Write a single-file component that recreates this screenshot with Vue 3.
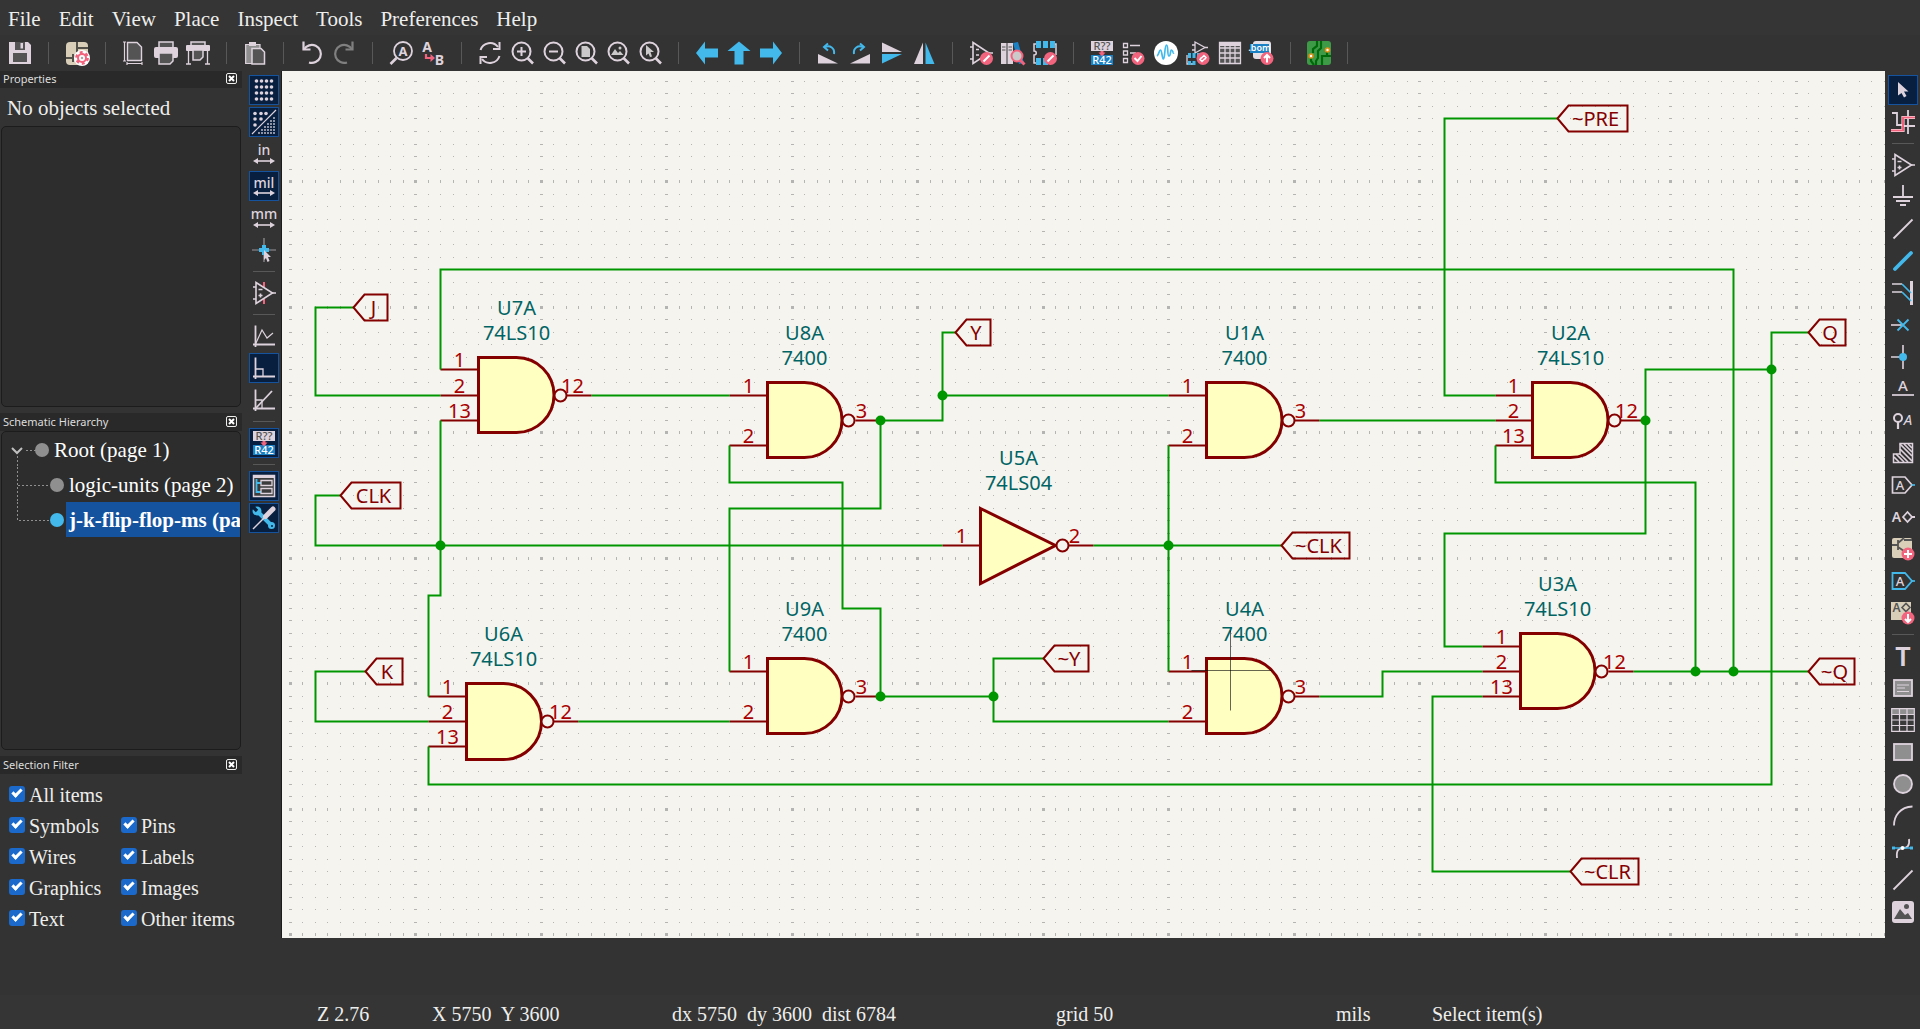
<script setup>
const L = '#ded3dd'
const B = '#42b8eb'
const R = '#f2647e'
const G = '#545454'
const T = '#1a81c4'

const line = (d, c = L, w = 1.6, extra = '') =>
  `<path d="${d}" fill="none" stroke="${c}" stroke-width="${w}" ${extra}/>`
const fill = (d, c = L) => `<path d="${d}" fill="${c}"/>`
const word = (x, y, s, t, c = L, w = 400, extra = '') =>
  `<text x="${x}" y="${y}" font-size="${s}" fill="${c}" font-weight="${w}" text-anchor="middle" font-family="Noto Sans, sans-serif" ${extra}>${t}</text>`
const dot = (x, y, r, c) => `<circle cx="${x}" cy="${y}" r="${r}" fill="${c}"/>`
const ring = (x, y, r, c, w, dash = '') =>
  `<circle cx="${x}" cy="${y}" r="${r}" fill="none" stroke="${c}" stroke-width="${w}" stroke-dasharray="${dash}"/>`
const rect = (x, y, w, h, c, extra = '') =>
  `<rect x="${x}" y="${y}" width="${w}" height="${h}" fill="${c}" ${extra}/>`
const lens = `<circle cx="11.5" cy="10.5" r="9" fill="none" stroke="${L}" stroke-width="2"/>` + line('M17.5 17L23 22.5', L, 2.6)
const opamp = line('M4 1.5L20.5 12L4 22.5Z') + line('M1 6H4M1 18H4M20 12H24') + line('M6.5 8.5H10.5M6.5 14.5H10.5M8.5 12.5V16.5')
const badge = (x, y, d) => dot(x, y, 6.5, R) + line(d, '#fff', 2)
const renumber = rect(1, 0, 22, 10, L) + word(12, 9, 11, 'R??', G, 500) + rect(1, 14, 22, 10, T) + word(12, 23, 11, 'R42', '#fff', 500) + fill('M8.5 11.5H10.5V10H13.5V11.5H15.5L12 15.5Z', R)
const dots = (() => {
  let s = ''
  for (let a = 0; a < 4; a++) for (let b = 0; b < 4; b++) s += dot(4.5 + a * 5, 3 + b * 6, 1.8, L)
  return s
})()
const dotsHalf = (() => {
  let s = dot(3, 3.5, 1.8, L) + dot(9, 3.5, 1.8, L) + dot(14, 3.5, 1.8, L) + dot(3, 9, 1.8, L) + dot(9, 9, 1.8, L) + dot(3, 15, 1.8, L)
  for (let a = 0; a < 6; a++) for (let b = 0; b < 6; b++) if (a + b > 4) s += rect(6 + a * 3, 7 + b * 3, 2, 2, '#8d93a5')
  return s + line('M0 24L24 0', L, 1.2)
})()
const span = line('M3 19H21') + fill('M1 19L6 16V22ZM23 19L18 16V22Z')
const axes = line('M3.5 1.5V23M1 20.5H23', L, 1.8)

const icons = {
  save: fill('M1 1H20L23 4V23H1Z') + rect(5, 12, 14, 9, G) + rect(7, 1, 10, 8, G) + rect(12.5, 2, 2.5, 5.5, L),
  setup: rect(1, 1, 22, 23, '#d9cfb9', 'rx="4"') + line('M1 17H8M8 13V21M8 17L14 12M12 1V7H23M12 7V12', '#54504a', 2) + dot(17, 17, 8, '#fff') + dot(17, 17, 5, R) + ring(17, 17, 5.6, R, 2.6, '2.93 2.93') + dot(17, 17, 3, '#fff') + dot(17, 17, 1.3, '#aaa'),
  page: line('M2.5 1V20M1 1H4M1 20H4M5 22.5H20M5 21V24M20 21V24', L, 1.2) + `<path d="M5.5 1.5H15L19.5 6V19.5H5.5Z" fill="${G}" stroke="${L}" stroke-width="1.4"/>`,
  print: `<path d="M5 6V1H19V6" fill="${G}" stroke="${L}" stroke-width="1.5"/>` + rect(0, 6, 24, 11, L, 'rx="2"') + `<path d="M5 12H19V20L16 23H5Z" fill="${G}" stroke="${L}" stroke-width="1.5"/>`,
  plot: `<path d="M5 5V1H19V5" fill="${G}" stroke="${L}" stroke-width="1.5"/>` + rect(0, 4, 24, 6, L, 'rx="1"') + line('M2.5 10V23M21.5 10V23M0 23H5M19 23H24', L, 1.3) + `<path d="M7 9H17V16L14 19H7Z" fill="${G}" stroke="${L}" stroke-width="1.5"/>`,
  paste: rect(2, 3, 15, 20, '#8f8f8f') + line('M2.7 3.5H17V22.5H2.7Z', L, 1.2) + rect(6, 1, 7, 4, L) + `<path d="M9 7.5H18L21.5 11V23H9Z" fill="${G}" stroke="${L}" stroke-width="1.5"/>`,
  undo: line('M4 8.5A9 9 0 1 1 9 21.5', L, 2.2) + line('M3.5 0.5V8.5H10.5', L, 2.2),
  redo: line('M20 8.5A9 9 0 1 0 15 21.5', '#808080', 2.2) + line('M20.5 0.5V8.5H13.5', '#808080', 2.2),
  find: `<circle cx="14" cy="10" r="9" fill="none" stroke="${L}" stroke-width="1.8"/>` + line('M7.5 17L1.5 23', L, 2.6) + word(14, 15, 13, 'A', L, 700),
  replace: word(6, 11, 14, 'A', L, 700) + word(18.5, 24, 14, 'B', L, 700) + line('M5 13V17H11', R, 2.2) + fill('M9.5 13L14 17L9.5 21Z', R),
  refresh: line('M2.5 9A10 10 0 0 1 20 6M21.5 15A10 10 0 0 1 4 18', L, 2) + line('M21.5 1V8H15M2.5 23V16H9', L, 2),
  zoomIn: lens + line('M7 10.5H16M11.5 6V15', L, 2),
  zoomOut: lens + line('M7 10.5H16', L, 2),
  zoomFit: lens + fill('M7.5 5H13L16 8V16H7.5Z', '#ccc9cb'),
  zoomObj: lens + fill('M5 14L9 8L12 12L14 10L17.5 14Z', '#ccc9cb') + dot(14, 7, 1.5, '#ccc9cb'),
  zoomSel: lens + fill('M8 4L16 11H12.5L14 15.5L12 16L10.5 12.5L8 14.5Z', '#ccc9cb'),
  left: fill('M1 12L10 0.5V7.5H23V16.5H10V23.5Z', B),
  up: fill('M12 0.5L23.5 10H16.5V23.5H7.5V10H0.5Z', B),
  right: fill('M23 12L14 0.5V7.5H1V16.5H14V23.5Z', B),
  rotL: fill('M2 13L22 22.5H2Z') + line('M18 13C19 7 14 4 9 6', B, 2) + line('M12 2.5L8 6L12 9.5', B, 2),
  rotR: fill('M22 13L2 22.5H22Z') + line('M6 13C5 7 10 4 15 6', B, 2) + line('M12 2.5L16 6L12 9.5', B, 2),
  flipV: fill('M2 1.5L22 11H2Z') + fill('M2 13H22L2 22.5Z', B),
  flipH: fill('M11 1.5V23H2Z') + fill('M13.5 1.5L22.5 23H13.5Z', B),
  symEdit: line('M4 1.5L20 12L4 22.5Z') + line('M1 6H4M1 18H4M20 12H24M7 8.5H10M7 14H10') + badge(17.5, 17.5, 'M14.5 20.5L20.5 14.5'),
  library: rect(0, 2, 5.5, 21, L) + rect(6.5, 2, 5.5, 21, L) + fill('M12 2L17 1L23 22L18 23Z', T) + line('M1 6H4.5M7.5 6H11M1 9H4.5M7.5 9H11', G, 1) + `<circle cx="16" cy="15" r="5.5" fill="#ccc9cb" stroke="${R}" stroke-width="2"/>` + line('M19 19L23.5 23.5', R, 3),
  fpEdit: line('M3 3H1V10C4 10 4 14 1 14V22H4M21 3H23V14', L, 1.5) + fill('M3 0H8V7H3ZM10 0H15V7H10ZM17 0H22V7H17ZM3 17H8V24H3ZM10 17H15V24H10Z', B) + badge(17.5, 17.5, 'M14.5 20.5L20.5 14.5'),
  renumber,
  erc: line('M1.5 2.5H5.5V6.5H1.5ZM1.5 10H5.5V14H1.5ZM1.5 17.5H5.5V21.5H1.5Z', L, 1.3) + line('M8 4.5H18M8 12H14', L, 1.5) + badge(16, 17.5, 'M12.5 17L15.5 20L19.5 15'),
  sim: dot(12, 12, 12, '#fff') + line('M3 15C5 14 5 9 6.5 9S8 18 9.5 18S10.5 4 12.5 4S13 15 15 15S16 9 17.5 9S19 13 20 12', B, 1.7),
  assign: line('M9 1L19 6.5L9 12ZM6 4H9M6 9H9M19 6.5H22', L, 1.3) + line('M1 14V23H8', L, 1.3) + fill('M2 12H5V17H2ZM6.5 12H9.5V17H6.5ZM11 12H14V17H11ZM2 20H5V24H2ZM6.5 20H9.5V24H6.5Z', B) + dot(17, 17.5, 6.5, R) + line('M15.5 17L18 14.5L20 16.5L18.5 18.5M18.5 18L16 20.5L14 18.5L15.5 16.5', '#fff', 1.5),
  table: rect(1, 1, 22, 22, G) + line('M1.5 1.5H22.5V22.5H1.5ZM1.5 7H22.5M1.5 12H22.5M1.5 17H22.5M7 1V23M12 5V23M17 5V23', L, 1.3) + rect(1, 1, 22, 4, L),
  bom: rect(3, 0, 18, 18, '#e4dfe4', 'rx="3"') + rect(0, 3, 19, 9, T) + word(9.5, 10, 9, '.bom', '#fff', 600) + badge(17, 17.5, 'M17 21.5V14.5M14 17L17 14L20 17'),
  pcb: rect(0, 0, 24, 24, '#3f9a48', 'rx="3"') + line('M4 15V20L7 24M10 0V5L6 8V12M14 0V7L11 10V17L9 20V24M24 15H15V24M20 9V14', '#00690a', 2.2) + dot(20.5, 9, 2.7, '#e39017') + dot(20.5, 9, 1.2, '#fff') + dot(4, 15, 2.7, '#e39017') + dot(4, 15, 1.2, '#fff'),
  dots,
  dotsHalf,
  inch: word(12, 13, 14, 'in', L, 500) + span,
  mil: word(12, 14, 14, 'mil', L, 500) + span,
  mm: word(12, 13, 14, 'mm', L, 500) + span,
  crosshair: line('M12 0V24M0 12H24', '#9a959a', 1.2) + line('M12 7V17M7 12H17', B, 4) + fill('M12 12L19 19H16L17.5 23L15.5 24L14 20L12 22Z'),
  hiddenPins: line('M12 1V6M12 18V23', R, 2) + opamp,
  freeAngle: axes + line('M3.5 20L10 6L15 14L21 9', L, 1.2),
  rightAngle: axes + line('M3.5 13H11V20.5', L, 1.3),
  angle45: axes + line('M4 20L20 3', L, 1.8) + line('M3.5 12H10V20.5', L, 1.3),
  hierarchy: rect(1, 1, 22, 22, '#3c3c3c') + line('M1.5 1.5H22.5V22.5H1.5Z', L, 1.5) + rect(1, 1, 22, 3, L) + line('M4.5 5V18H9M4.5 9H9', B, 1.8) + line('M9 6.5H20V11.5H9ZM9 14.5H20V19.5H9Z', L, 1.3),
  tools: line('M5 5L20 20', B, 4) + dot(5, 5, 4.5, B) + dot(19.5, 19.5, 3.5, B) + line('M0 0L5 5', '#081f3f', 3.4) + dot(20, 20, 1, '#081f3f') + line('M1 23L13 11', L, 1.5) + line('M13.5 10.5L21 3', L, 5, 'stroke-linecap="round"'),
  select: fill('M7 4L17.5 13.5H13L15.5 18L13 19.5L10.5 15L7 17.5Z'),
  highlight: line('M1 3H6V15H11M17 0V24M12 7H24M12 16H24', L, 1.8) + line('M0 20.5H12V7.5H24', '#fff', 3) + line('M0 20.5H12V7.5H24', R, 2.2),
  opamp,
  ground: line('M12 0V12M2 12H22M5 16H19M9 20H15', L, 1.8),
  line: line('M2.5 21.5L21.5 2.5', L, 1.8),
  wire: line('M4 20L20 4', B, 3.8, 'stroke-linecap="round"'),
  bus: line('M20.5 0V24', L, 3) + line('M1 3H11M1 11H11', L, 1.7) + line('M11 3L20 12M11 11L20 20', B, 1.7),
  noConnect: line('M0 12H11', L, 1.6) + line('M6.5 6.5L17.5 17.5M17.5 6.5L6.5 17.5', B, 1.8),
  junction: line('M0 12H12M12 0V24', L, 1.6) + dot(12, 12, 4, B),
  netLabel: word(12, 14, 15, 'A', L, 500) + line('M1 18H23', L, 1.7),
  classLabel: `<circle cx="7" cy="9" r="4" fill="none" stroke="${L}" stroke-width="2"/>` + line('M7 13V20', L, 2.2) + word(17, 16, 15, 'A', L, 400, 'font-style="italic"'),
  ruleArea: `<path d="M9 2.5H21.5V21.5H2.5V13H9Z" fill="#333" stroke="${L}" stroke-width="1.5"/>` + line('M9 3L21 15M13 3L21 11M17 3L21 7M9 8L21 20M9 13L17 21M5 13L13 21M3 16L8 21', L, 1.7),
  globalLabel: line('M1.5 4H14L21 12L14 20H1.5Z', L, 1.7) + line('M20.5 12H24', B, 1.7) + word(9, 17, 13, 'A', L, 500),
  hierLabel: word(5.5, 17, 14, 'A', L, 600) + line('M12 12L16.5 7L21 12L16.5 17ZM21 12H24', L, 1.8),
  sheet: rect(1, 1, 20, 20, '#d9cfb9', 'rx="2"') + line('M1 8H7M7 3V13M7 6L13 1M7 10L13 14M13 3H21', G, 1.8) + badge(17, 17, 'M17 13V21M13 17H21'),
  sheetPin: line('M1.5 4H14L21 12L14 20H1.5Z', B, 1.8) + line('M20.5 12H24', B, 1.7) + word(9, 17, 13, 'A', L, 500),
  importPin: rect(0, 1, 20, 18, '#d9cfb9') + word(5.5, 11, 12, 'A', G, 600) + line('M11 6.5L15 2.5L19 6.5L15 10.5Z', G, 1.6) + badge(17, 17, 'M17 13V20.5M14 18L17 21L20 18'),
  text: word(12, 22, 27, 'T', L, 600),
  textBox: `<rect x="3" y="4" width="18" height="16" fill="#8f8f8f" stroke="${L}" stroke-width="1.8"/>` + line('M6 9H18M6 12H14M6 15.5H18', L, 1.2),
  grid: rect(1, 1, 22, 22, '#3a3a3a') + rect(1, 1, 22, 5, '#8f8f8f') + line('M0.7 0.7H23.3V23.3H0.7ZM1 6.5H23M1 12H23M1 17.5H23M8.5 1V23M16 1V23', L, 1.2),
  rectangle: `<rect x="3" y="4" width="18" height="16" fill="#8f8f8f" stroke="${L}" stroke-width="1.8"/>`,
  circle: `<circle cx="12" cy="12" r="9" fill="#8f8f8f" stroke="${L}" stroke-width="1.8"/>`,
  arc: line('M3 21.5C3 12 9 3 21.5 2.5', L, 1.8),
  bezier: line('M6 22C5 14 8 12 12 12S19 10 18 3', L, 1.8) + line('M2 12H22', B, 1.4) + rect(1, 10.5, 3, 3, B) + rect(19, 10.5, 3, 3, B) + dot(11.5, 12, 2, '#fff'),
  image: rect(1, 1, 22, 22, L, 'rx="3"') + fill('M3 19L9 9L14 15L17 13L21 19Z', G) + dot(15.5, 6.5, 2.5, G)
}

const menus = ['File', 'Edit', 'View', 'Place', 'Inspect', 'Tools', 'Preferences', 'Help']
const topTools = 'save | setup | page print plot | paste | undo redo | find replace | refresh zoomIn zoomOut zoomFit zoomObj zoomSel | left up right | rotL rotR flipV flipH | symEdit library fpEdit | renumber erc sim assign table bom | pcb |'.split(' ')
const leftTools = '*dots *dotsHalf inch *mil mm crosshair | hiddenPins | freeAngle *rightAngle angle45 | *renumber | *hierarchy *tools'.split(' ')
const rightTools = '*select highlight | opamp ground line wire bus noConnect junction netLabel classLabel ruleArea globalLabel hierLabel sheet sheetPin importPin | text textBox grid rectangle circle arc bezier line image'.split(' ')
const filters = ['All items', '', 'Symbols', 'Pins', 'Wires', 'Labels', 'Graphics', 'Images', 'Text', 'Other items']

// Schematic coordinates are 50 mil grid steps; gx and gy give the centre of the matching pixel.
const step = 12.55
const gx = (i) => Math.floor(8.3 + i * step) + 0.5
const gy = (j) => Math.floor(10.3 + j * step) + 0.5

let gridPath = ''
for (let i = 0; i < 200; i++) {
  for (let j = 0; j < 110; j++) {
    const w = i % 10 === 0 ? 3 : 1
    const h = j % 10 === 8 ? 3 : 1
    gridPath += `M${gx(i) - w / 2} ${gy(j) - h / 2}h${w}v${h}h-${w}z`
  }
}

const poly = (pts) => pts.split(' ').map((p) => p.split(',').map(Number)).map(([a, b]) => `${gx(a)},${gy(b)}`).join(' ')
const wires = [
  '5,18 2,18 2,25 12,25', '12,23 12,15 115,15 115,47', '12,27 12,41 11,41 11,49', '4,33 2,33 2,37 52,37',
  '6,47 2,47 2,51 11,51', '24,25 35,25', '23,51 35,51', '35,29 35,32 44,32 44,42 47,42 47,49',
  '47,27 47,34 35,34 35,47', '47,27 52,27 52,20 53,20', '52,25 70,25', '47,49 56,49 56,46 60,46', '56,49 56,51 70,51',
  '64,37 79,37', '70,29 70,47', '82,27 96,27', '101,3 92,3 92,25 96,25', '96,29 96,32 112,32 112,47',
  '108,27 108,23 118,23', '108,27 108,36 92,36 92,45 95,45', '121,20 118,20 118,56 11,56 11,53',
  '82,49 87,49 87,47 95,47', '107,47 121,47', '95,49 91,49 91,63 102,63'
].map(poly)
const junctions = [[12, 37], [47, 27], [52, 25], [47, 49], [56, 49], [70, 37], [108, 27], [118, 23], [112, 47], [115, 47]]
const three = [[-2, '1'], [0, '2'], [2, '13']]
const two = [[-2, '1'], [2, '2']]
const gates = [
  { ref: 'U7A', val: '74LS10', x: 15, y: 25, pins: three, out: '12' },
  { ref: 'U6A', val: '74LS10', x: 14, y: 51, pins: three, out: '12' },
  { ref: 'U8A', val: '7400', x: 38, y: 27, pins: two, out: '3' },
  { ref: 'U9A', val: '7400', x: 38, y: 49, pins: two, out: '3' },
  { ref: 'U1A', val: '7400', x: 73, y: 27, pins: two, out: '3' },
  { ref: 'U4A', val: '7400', x: 73, y: 49, pins: two, out: '3' },
  { ref: 'U2A', val: '74LS10', x: 99, y: 27, pins: three, out: '12' },
  { ref: 'U3A', val: '74LS10', x: 98, y: 47, pins: three, out: '12' },
  { ref: 'U5A', val: '74LS04', x: 55, y: 37, pins: [[0, '1']], out: '2', inverter: true }
]
const body = (g) => {
  const x = gx(g.x)
  const t = gy(g.y - 3)
  const b = gy(g.y + 3)
  if (g.inverter) return `M${x} ${t}L${gx(g.x + 6)} ${gy(g.y)}L${x} ${b}Z`
  const r = (b - t) / 2
  return `M${x} ${t}H${gx(g.x + 3)}A${r} ${r} 0 0 1 ${gx(g.x + 3)} ${b}H${x}Z`
}
const labels = [
  { t: 'J', x: 5, y: 18, w: 34 }, { t: 'CLK', x: 4, y: 33, w: 60 }, { t: 'K', x: 6, y: 47, w: 37 },
  { t: 'Y', x: 53, y: 20, w: 35 }, { t: '~Y', x: 60, y: 46, w: 45 }, { t: '~CLK', x: 79, y: 37, w: 68 },
  { t: '~PRE', x: 101, y: 3, w: 70 }, { t: 'Q', x: 121, y: 20, w: 37 }, { t: '~Q', x: 121, y: 47, w: 46 },
  { t: '~CLR', x: 102, y: 63, w: 68 }
]
const flag = (l) => {
  const x = gx(l.x)
  const y = gy(l.y)
  return `M${x} ${y}L${x + 11} ${y - 13}H${x + l.w}V${y + 13}H${x + 11}Z`
}
</script>

<template>
  <div class="app">
    <nav class="menu">
      <button v-for="m in menus" :key="m" type="button">{{ m }}</button>
    </nav>
    <div class="toolbar top">
      <template v-for="(t, i) in topTools" :key="i">
        <i v-if="t === '|'" class="sep"></i>
        <button v-else class="tool" type="button" :aria-label="t"><svg viewBox="0 0 24 24" v-html="icons[t]"></svg></button>
      </template>
    </div>

    <div class="workspace">
      <aside class="panels">
        <header class="title">Properties
          <button type="button" aria-label="Close"><svg viewBox="0 0 9 9"><path d="M2 2L7 7M7 2L2 7" /></svg></button>
        </header>
        <p class="empty">No objects selected</p>
        <div class="box properties"></div>
        <header class="title second">Schematic Hierarchy
          <button type="button" aria-label="Close"><svg viewBox="0 0 9 9"><path d="M2 2L7 7M7 2L2 7" /></svg></button>
        </header>
        <ul class="box tree">
          <li>
            <svg width="49" height="35">
              <path class="branch" d="M24 18.500H34M15.500 24V35" />
              <path class="chevron" d="M10 16L15 21L20 16" />
              <circle cx="40" cy="18" r="7" />
            </svg><span>Root (page 1)</span>
          </li>
          <li>
            <svg width="64" height="35">
              <path class="branch" d="M15.500 0V35M16 18.500H48" />
              <circle cx="55" cy="18" r="7" />
            </svg><span>logic-units (page 2)</span>
          </li>
          <li class="current">
            <svg width="64" height="35">
              <path class="branch" d="M15.500 0V18.500H48" />
              <circle class="on" cx="55" cy="18" r="7" />
            </svg><span>j-k-flip-flop-ms (page 3)</span>
          </li>
        </ul>
        <header class="title second">Selection Filter
          <button type="button" aria-label="Close"><svg viewBox="0 0 9 9"><path d="M2 2L7 7M7 2L2 7" /></svg></button>
        </header>
        <div class="filters">
          <template v-for="(f, i) in filters" :key="i">
            <label v-if="f"><input type="checkbox" checked />{{ f }}</label>
            <span v-else></span>
          </template>
        </div>
      </aside>

      <div class="toolbar side">
        <template v-for="(t, i) in leftTools" :key="i">
          <i v-if="t === '|'" class="sep"></i>
          <button v-else class="tool" :class="{ active: t[0] === '*' }" type="button" :aria-label="t.replace('*', '')"><svg viewBox="0 0 24 24" v-html="icons[t.replace('*', '')]"></svg></button>
        </template>
      </div>

      <main class="canvas">
        <svg class="sheet">
          <path class="grid" :d="gridPath" />
          <g v-for="g in gates" :key="g.ref">
            <path class="body" :d="body(g)" />
            <g v-for="p in g.pins" :key="p[1]">
              <path class="pin" :d="`M${gx(g.x - 3)} ${gy(g.y + p[0])}H${gx(g.x)}`" />
              <text class="number" :x="gx(g.x - 1.5)" :y="gy(g.y + p[0]) - 3">{{ p[1] }}</text>
            </g>
            <path class="pin" :d="`M${gx(g.x + 7)} ${gy(g.y)}H${gx(g.x + 9)}`" />
            <circle class="bubble" :cx="gx(g.x + 6.5)" :cy="gy(g.y)" r="6" />
            <text class="number" :x="gx(g.x + 7.5)" :y="gy(g.y) - 3">{{ g.out }}</text>
            <text class="name" :x="gx(g.x + 3)" :y="gy(g.y - 7) + 7">{{ g.ref }}</text>
            <text class="name" :x="gx(g.x + 3)" :y="gy(g.y - 5) + 7">{{ g.val }}</text>
          </g>
          <polyline v-for="(w, i) in wires" :key="i" class="wire" :points="w" />
          <circle v-for="(j, i) in junctions" :key="i" class="junction" :cx="gx(j[0])" :cy="gy(j[1])" r="5" />
          <g v-for="l in labels" :key="l.t">
            <path class="flag" :d="flag(l)" />
            <text class="label" :x="gx(l.x) + l.w / 2 + 3" :y="gy(l.y) + 7">{{ l.t }}</text>
          </g>
          <path class="cursor" :d="`M${gx(75) - 40} ${gy(47) - 1}h80M${gx(75) - 1} ${gy(47) - 41}v80`" />
        </svg>
      </main>

      <div class="toolbar side right">
        <template v-for="(t, i) in rightTools" :key="i">
          <i v-if="t === '|'" class="sep"></i>
          <button v-else class="tool" :class="{ active: t[0] === '*' }" type="button" :aria-label="t.replace('*', '')"><svg viewBox="0 0 24 24" v-html="icons[t.replace('*', '')]"></svg></button>
        </template>
      </div>
    </div>

    <div class="messages"></div>
    <footer class="status">
      <span>Z 2.76</span>
      <span>X 5750&nbsp; Y 3600</span>
      <span>dx 5750&nbsp; dy 3600&nbsp; dist 6784</span>
      <span>grid 50</span>
      <span>mils</span>
      <span>Select item(s)</span>
    </footer>
  </div>
</template>

<style>
body {
  margin: 0;
  background: #333333;
}
</style>

<style scoped>
.app {
  display: flex;
  flex-direction: column;
  min-height: 100vh;
  background: #333333;
  color: #eeeeec;
  font: 21px/24px "Liberation Serif", serif;
}
button {
  padding: 0;
  border: 0;
  background: none;
  color: inherit;
  font: inherit;
}
.menu {
  display: flex;
  gap: 18px;
  height: 35px;
  padding: 3px 8px 0;
  box-sizing: border-box;
  background: #353535;
}
.toolbar {
  display: flex;
  flex: none;
}
.toolbar.top {
  height: 36px;
  align-items: center;
  padding-left: 4px;
  box-sizing: border-box;
}
.toolbar.side {
  flex-direction: column;
  align-items: center;
  width: 39px;
  padding: 3px 0 0 5px;
  box-sizing: border-box;
}
.toolbar.right {
  width: 35px;
  padding-left: 1px;
}
.tool {
  display: flex;
  align-items: center;
  justify-content: center;
  width: 30px;
  height: 30px;
  margin: 1px;
  box-sizing: border-box;
  flex: none;
}
.tool svg {
  width: 24px;
  height: 24px;
  flex: none;
  overflow: visible;
}
.tool.active {
  background: #081f3f;
  border: 1px solid #15539e;
}
.sep {
  display: flex;
  flex: none;
  width: 25px;
  justify-content: center;
}
.sep::before {
  content: "";
  width: 1px;
  height: 22px;
  background: #585858;
}
.side .sep {
  width: 22px;
  height: 11px;
  align-items: center;
}
.side .sep::before {
  width: 22px;
  height: 1px;
}
.workspace {
  display: flex;
  flex: 1;
  min-height: 867px;
}
.panels {
  display: flex;
  flex-direction: column;
  flex: none;
  width: 242px;
}
.title {
  display: flex;
  align-items: center;
  justify-content: space-between;
  height: 17px;
  padding: 0 5px 2px 3px;
  box-sizing: border-box;
  background: #292929;
  color: #dddddd;
  font: 11px/15px "Noto Sans", sans-serif;
  flex: none;
}
.title.second {
  margin-top: 6px;
  height: 18px;
}
.title button {
  display: flex;
}
.title svg {
  width: 11px;
  height: 11px;
  box-sizing: border-box;
  border: 1px solid #eeeeec;
  border-radius: 2px;
}
.title path {
  stroke: #ffffff;
  stroke-width: 2px;
  fill: none;
}
.empty {
  margin: 0;
  padding: 8px 7px 6px;
  flex: none;
}
.box {
  margin: 0 1px;
  box-sizing: border-box;
  background: #2d2d2d;
  border: 1px solid #1c1c1c;
  border-radius: 5px;
}
.properties {
  flex: 281 1 0;
}
.tree {
  flex: 319 1 0;
  padding: 0;
  overflow: hidden;
  list-style: none;
  color: #ffffff;
}
.tree li {
  display: flex;
  height: 35px;
  line-height: 37px;
  white-space: nowrap;
}
.tree svg {
  flex: none;
}
.tree span {
  flex: 1;
  padding-left: 3px;
}
.current span {
  background: #15539e;
  font-weight: bold;
}
.tree circle {
  fill: #8f8f8f;
}
.tree circle.on {
  fill: #42b8eb;
}
.branch {
  fill: none;
  stroke: #8f8f8f;
  stroke-dasharray: 2 2;
}
.chevron {
  fill: none;
  stroke: #c0c0c0;
  stroke-width: 2px;
}
.filters {
  display: grid;
  grid-template-columns: 112px 1fr;
  grid-auto-rows: 31px;
  height: 159px;
  padding: 5px 0 0 9px;
  font-size: 20px;
  white-space: nowrap;
}
.filters label {
  display: flex;
  align-items: center;
  gap: 4px;
}
.filters input {
  appearance: none;
  position: relative;
  flex: none;
  width: 16px;
  height: 16px;
  margin: 0 0 2px;
  border-radius: 3px;
  background: #1b6acb;
}
.filters input::before {
  content: "";
  position: absolute;
  left: 3px;
  top: 3px;
  width: 7px;
  height: 3px;
  border: solid #ffffff;
  border-width: 0 0 3px 3px;
  transform: rotate(-45deg);
}
.canvas {
  display: flex;
  flex: 1;
  min-width: 0;
  border-left: 1px solid #1c1c1c;
  background: #f5f4ef;
}
.sheet {
  flex: 1;
  width: 0;
  min-width: 0;
  font-family: "Noto Sans", sans-serif;
  font-size: 20px;
}
.sheet text {
  text-anchor: middle;
}
.grid {
  fill: #b4b4b2;
  shape-rendering: crispEdges;
}
.wire {
  fill: none;
  stroke: #009600;
  stroke-width: 2px;
}
.junction {
  fill: #009600;
}
.body {
  fill: #ffffc2;
  stroke: #840000;
  stroke-width: 3px;
}
.pin {
  stroke: #840000;
  stroke-width: 2px;
}
.bubble {
  fill: #f5f4ef;
  stroke: #840000;
  stroke-width: 2px;
}
.number {
  fill: #a90000;
}
.name {
  fill: #006464;
}
.flag {
  fill: none;
  stroke: #840000;
  stroke-width: 2px;
}
.label {
  fill: #840000;
}
.cursor {
  fill: none;
  stroke: #000000;
  stroke-opacity: 0.6;
}
.messages {
  height: 57px;
  flex: none;
}
.status {
  display: grid;
  grid-template-columns: 115px 240px 384px 280px 96px 1fr;
  align-items: center;
  height: 34px;
  padding: 4px 0 0 317px;
  box-sizing: border-box;
  background: #353535;
  font-size: 20px;
  flex: none;
}
</style>
